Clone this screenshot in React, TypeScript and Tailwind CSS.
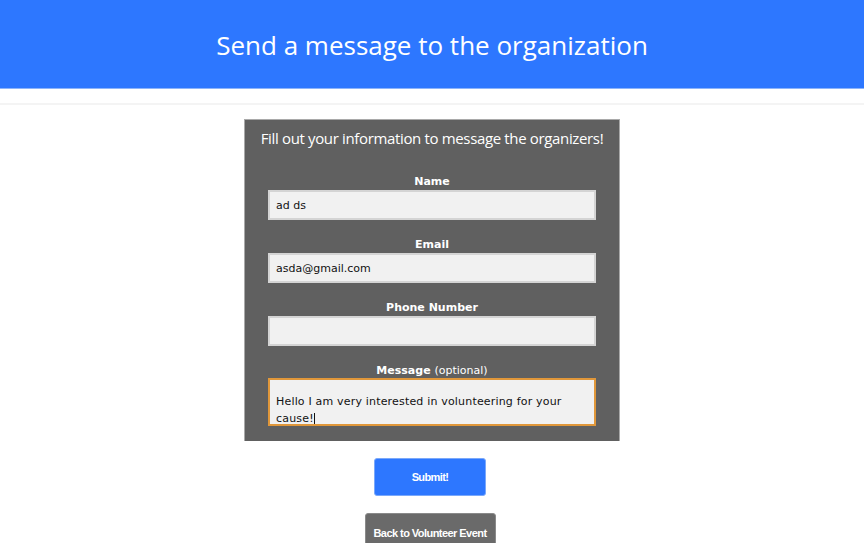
const labelFont = { fontFamily: '"DejaVu Sans", Verdana, sans-serif' };

const Field = ({ label, extra, value }: { label: string; extra?: string; value: string }) => (
  <div className="flex flex-col items-center">
    <label className="text-[11px] leading-[14px] font-bold text-white" style={labelFont}>
      {label}
      {extra && <span className="font-normal"> {extra}</span>}
    </label>
    <input
      readOnly
      value={value}
      className="mt-px h-[30px] w-[328px] bg-[#f1f1f1] border-2 border-[#d4d4d4] px-[6px] text-[11px] text-[#111] outline-none"
      style={labelFont}
    />
  </div>
);

export default function App() {
  return (
    <div className="min-h-screen bg-white" style={{ fontFamily: '"Open Sans", sans-serif' }}>
      {/* Header */}
      <header className="h-[89px] bg-[#2d77ff] border-b border-[#8cb4fb] flex items-center justify-center pt-[3px]">
        <h1 className="text-[26px] text-white">Send a message to the organization</h1>
      </header>

      <div className="mt-[14px] h-[2px] bg-[#f4f4f4]" />

      <main className="flex flex-col items-center pt-[14px]">
        <div className="w-[376px] bg-[#606060] border border-b-0 border-[#a9a9a9] pt-[8px] pb-[15px] flex flex-col items-center">
          <p className="text-[15px] leading-[20px] text-white tracking-[-0.35px]">
            Fill out your information to message the organizers!
          </p>
          <div className="mt-[27px] flex flex-col gap-[18px]">
            <Field label="Name" value="ad ds" />
            <Field label="Email" value="asda@gmail.com" />
            <Field label="Phone Number" value="" />
            <div className="flex flex-col items-center">
              <label className="text-[11px] leading-[14px] font-bold text-white" style={labelFont}>
                Message <span className="font-normal">(optional)</span>
              </label>
              <div
                className="h-[48px] w-[328px] bg-[#f1f1f1] border-2 border-[#e0973a] px-[6px] pt-[13px] text-[11px] leading-[17px] tracking-[0.18px] text-[#111] overflow-hidden"
                style={labelFont}
              >
                Hello I am very interested in volunteering for your cause!
                <span className="inline-block w-px h-[13px] bg-[#111] align-middle" />
              </div>
            </div>
          </div>
        </div>

        <button
          className="mt-[17px] mr-[4px] w-[112px] h-[38px] rounded-[3px] bg-[#2d77ff] border border-[#7aa8fa] text-white text-[11px] font-bold tracking-[-0.6px]"
          style={{ fontFamily: '"Liberation Sans", Arial, sans-serif' }}
        >
          Submit!
        </button>
        <button
          className="mt-[17px] mr-[4px] w-[131px] h-[38px] rounded-t-[3px] bg-[#6a6a6a] border border-[#8a8a8a] text-white text-[11px] font-bold tracking-[-0.55px] pt-[2px]"
          style={{ fontFamily: '"Liberation Sans", Arial, sans-serif' }}
        >
          Back to Volunteer Event
        </button>
      </main>
    </div>
  );
}
